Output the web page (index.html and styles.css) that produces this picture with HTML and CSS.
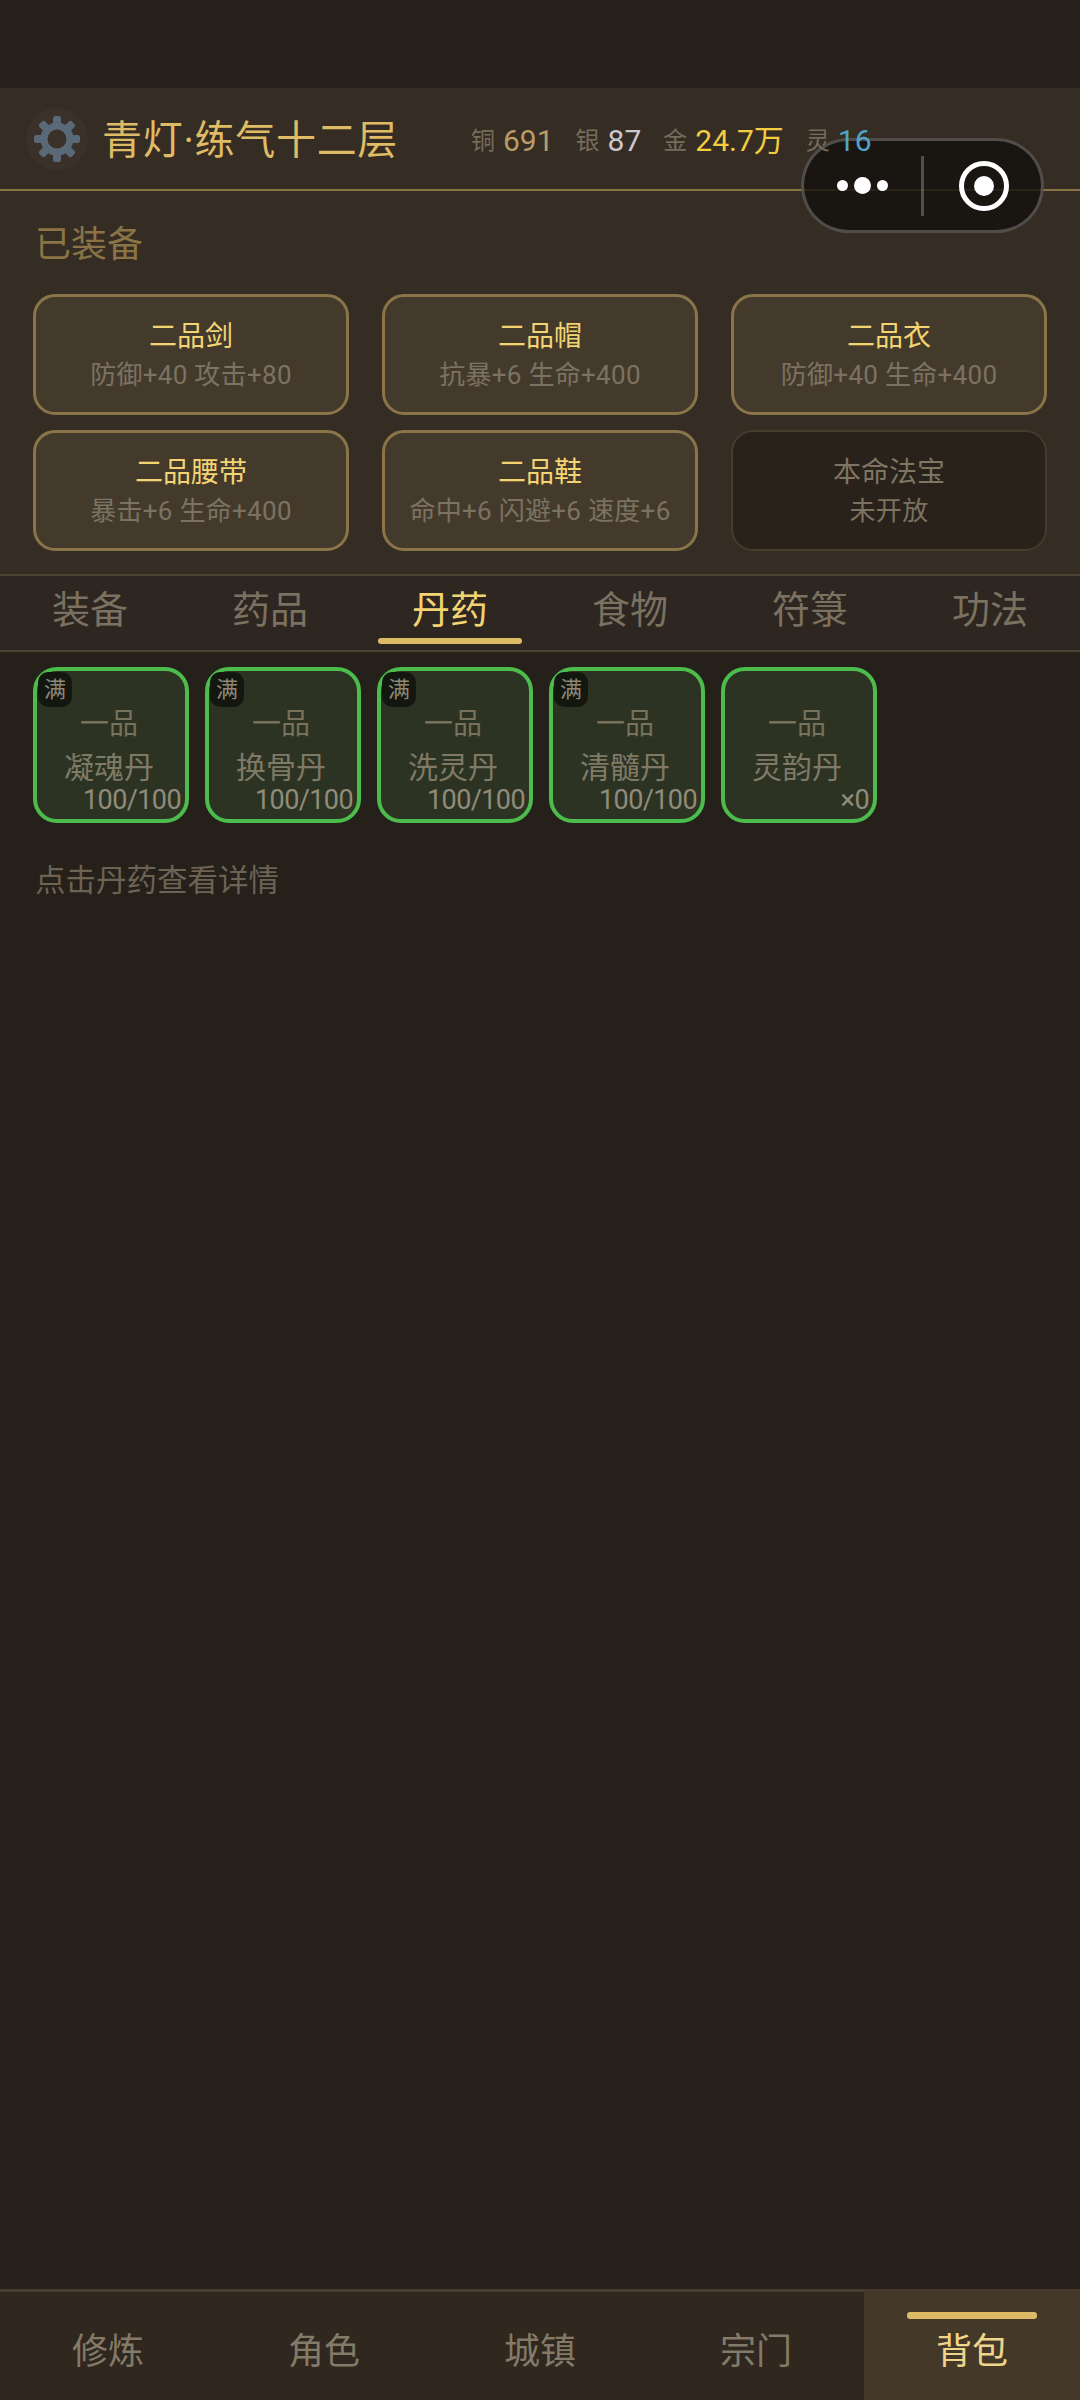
FILE: index.html
```html
<!DOCTYPE html>
<html lang="zh">
<head>
    <meta charset="UTF-8">
    <meta name="viewport" content="width=device-width, initial-scale=1.0">
    <title>背包</title>
    <link rel="stylesheet" href="styles.css">
</head>
<body>
    <div class="status-bar"></div>

    <div class="capsule">
        <div class="capsule-dots">
            <span class="dot"></span>
            <span class="dot dot-big"></span>
            <span class="dot"></span>
        </div>
        <span class="capsule-line"></span>
        <div class="capsule-target"><span></span></div>
    </div>

    <header class="top-bar">
        <div class="gear">
            <svg width="46" height="46" viewBox="0 0 46 46">
                <g fill="#5a6977">
                    <rect x="19" y="0" width="8" height="46" rx="2.5"/>
                    <rect x="19" y="0" width="8" height="46" rx="2.5" transform="rotate(45 23 23)"/>
                    <rect x="19" y="0" width="8" height="46" rx="2.5" transform="rotate(90 23 23)"/>
                    <rect x="19" y="0" width="8" height="46" rx="2.5" transform="rotate(135 23 23)"/>
                </g>
                <circle cx="23" cy="23" r="13" fill="#3a312a" stroke="#5a6977" stroke-width="7"/>
            </svg>
        </div>
        <div class="player-name">青灯<span class="name-dot">·</span>练气十二层</div>
        <div class="money">
            <div class="money-item"><span class="money-label">铜</span><span class="copper">691</span></div>
            <div class="money-item"><span class="money-label">银</span><span class="silver">87</span></div>
            <div class="money-item"><span class="money-label">金</span><span class="gold">24.7万</span></div>
            <div class="money-item"><span class="money-label">灵</span><span class="spirit">16</span></div>
        </div>
    </header>

    <section class="equipped">
        <h2 class="section-title">已装备</h2>
        <div class="equip-grid">
            <div class="equip-card">
                <div class="equip-name">二品剑</div>
                <div class="equip-stats">防御+40 攻击+80</div>
            </div>
            <div class="equip-card">
                <div class="equip-name">二品帽</div>
                <div class="equip-stats">抗暴+6 生命+400</div>
            </div>
            <div class="equip-card">
                <div class="equip-name">二品衣</div>
                <div class="equip-stats">防御+40 生命+400</div>
            </div>
            <div class="equip-card">
                <div class="equip-name">二品腰带</div>
                <div class="equip-stats">暴击+6 生命+400</div>
            </div>
            <div class="equip-card">
                <div class="equip-name">二品鞋</div>
                <div class="equip-stats">命中+6 闪避+6 速度+6</div>
            </div>
            <div class="equip-card locked">
                <div class="equip-name">本命法宝</div>
                <div class="equip-stats">未开放</div>
            </div>
        </div>
    </section>

    <nav class="tabs">
        <div class="tab">装备</div>
        <div class="tab">药品</div>
        <div class="tab active">丹药</div>
        <div class="tab">食物</div>
        <div class="tab">符箓</div>
        <div class="tab">功法</div>
    </nav>

    <main class="content">
        <div class="item-list">
            <div class="item">
                <span class="badge">满</span>
                <div class="item-grade">一品</div>
                <div class="item-name">凝魂丹</div>
                <div class="item-count">100/100</div>
            </div>
            <div class="item">
                <span class="badge">满</span>
                <div class="item-grade">一品</div>
                <div class="item-name">换骨丹</div>
                <div class="item-count">100/100</div>
            </div>
            <div class="item">
                <span class="badge">满</span>
                <div class="item-grade">一品</div>
                <div class="item-name">洗灵丹</div>
                <div class="item-count">100/100</div>
            </div>
            <div class="item">
                <span class="badge">满</span>
                <div class="item-grade">一品</div>
                <div class="item-name">清髓丹</div>
                <div class="item-count">100/100</div>
            </div>
            <div class="item">
                <div class="item-grade">一品</div>
                <div class="item-name">灵韵丹</div>
                <div class="item-count">×0</div>
            </div>
        </div>
        <p class="hint">点击丹药查看详情</p>
    </main>

    <footer class="bottom-nav">
        <div class="nav-item">修炼</div>
        <div class="nav-item">角色</div>
        <div class="nav-item">城镇</div>
        <div class="nav-item">宗门</div>
        <div class="nav-item active">背包</div>
    </footer>
</body>
</html>
```

FILE: styles.css
```css
* {
    box-sizing: border-box;
}

html, body {
    height: 100%;
}

body {
    margin: 0;
    height: 2400px;
    display: flex;
    flex-direction: column;
    position: relative;
    overflow: hidden;
    background: #25201a;
    font-family: Roboto, "Noto Sans CJK SC", sans-serif;
}

.status-bar {
    height: 88px;
    background: #26211b;
}

/* wechat capsule */
.capsule {
    position: absolute;
    top: 138px;
    left: 801px;
    width: 243px;
    height: 95px;
    display: flex;
    align-items: center;
    background: rgba(20, 16, 13, 0.82);
    border: 3px solid rgba(255, 255, 255, 0.24);
    border-radius: 48px;
    z-index: 5;
}

.capsule-dots {
    width: 117px;
    display: flex;
    align-items: center;
    justify-content: center;
    gap: 6px;
}

.dot {
    width: 11px;
    height: 11px;
    border-radius: 50%;
    background: #fff;
}

.dot-big {
    width: 17px;
    height: 17px;
}

.capsule-line {
    width: 3px;
    height: 60px;
    background: rgba(255, 255, 255, 0.25);
}

.capsule-target {
    width: 50px;
    height: 50px;
    margin-left: 35px;
    display: flex;
    align-items: center;
    justify-content: center;
    border: 5px solid #fff;
    border-radius: 50%;
}

.capsule-target span {
    width: 20px;
    height: 20px;
    border-radius: 50%;
    background: #fff;
}

.top-bar {
    height: 103px;
    padding-left: 26px;
    padding-top: 2px;
    display: flex;
    align-items: center;
    background: #352c24;
    border-bottom: 2px solid #8a7444;
}

.gear {
    width: 62px;
    height: 62px;
    margin-top: -2px;
    display: flex;
    align-items: center;
    justify-content: center;
    border-radius: 50%;
    background: #3a312a;
}

.player-name {
    margin-left: 14px;
    padding-top: 2px;
    font-size: 40px;
    line-height: 50px;
    letter-spacing: 0.7px;
    color: #dfbb66;
    white-space: nowrap;
}

.money {
    position: absolute;
    top: 117px;
    left: 471px;
    display: flex;
    gap: 22px;
    z-index: 6;
}

.money-item {
    display: flex;
    align-items: center;
    gap: 8px;
    font-size: 30px;
    line-height: 48px;
    white-space: nowrap;
}

.money-label {
    font-size: 24px;
    color: #766c5c;
}

.copper {
    color: #b99c66;
}

.silver {
    color: #c9c8cf;
}

.gold {
    color: #f1cd3f;
}

.spirit {
    color: #51a5c9;
}

.equipped {
    height: 383px;
    padding: 0 33px;
    background: #352c24;
}

.section-title {
    margin: 0;
    padding-top: 31px;
    padding-left: 2px;
    font-size: 36px;
    line-height: 46px;
    font-weight: 400;
    color: #8a7446;
}

.equip-grid {
    margin-top: 26px;
    display: grid;
    grid-template-columns: repeat(3, 316px);
    grid-auto-rows: 121px;
    column-gap: 33px;
    row-gap: 15px;
}

.equip-card {
    display: flex;
    flex-direction: column;
    align-items: center;
    justify-content: center;
    gap: 2px;
    padding-top: 3px;
    background: #443a2c;
    border: 3px solid #8a7549;
    border-radius: 22px;
}

.equip-name {
    font-size: 28px;
    line-height: 36px;
    color: #f2d473;
}

.equip-stats {
    font-size: 26px;
    line-height: 36px;
    letter-spacing: 0.3px;
    color: #7b7261;
    white-space: nowrap;
}

.equip-card.locked {
    background: #29221b;
    border: 2px solid #463b2c;
}

.locked .equip-name {
    color: #7e7563;
}

.tabs {
    height: 78px;
    display: flex;
    background: #2e2620;
    border-top: 2px solid #4d412f;
    border-bottom: 2px solid #4d412f;
}

.tab {
    width: 180px;
    position: relative;
    text-align: center;
    font-size: 38px;
    line-height: 68px;
    color: #7a7160;
}

.tab.active {
    color: #f2d473;
}

.tab.active::after {
    content: "";
    position: absolute;
    left: 18px;
    right: 18px;
    bottom: 6px;
    height: 6px;
    border-radius: 3px;
    background: #dcba66;
}

.content {
    flex: 1;
    padding: 15px 33px 0;
}

.item-list {
    display: flex;
    gap: 16px;
}

.item {
    position: relative;
    width: 156px;
    height: 156px;
    padding: 33px 4px 0 0;
    background: #2c3323;
    border: 4px solid #4cbc4c;
    border-radius: 24px;
    text-align: center;
}

.badge {
    position: absolute;
    top: 1px;
    left: 1px;
    width: 34px;
    height: 35px;
    border-radius: 10px;
    background: #14170f;
    font-size: 22px;
    line-height: 35px;
    color: #8e8875;
}

.item-grade {
    font-size: 29px;
    line-height: 40px;
    color: #777259;
}

.item-name {
    margin-top: 4px;
    font-size: 30px;
    line-height: 40px;
    color: #7f7a66;
}

.item-count {
    position: absolute;
    right: 4px;
    bottom: 2px;
    font-size: 27px;
    line-height: 34px;
    letter-spacing: -0.6px;
    color: #918c7a;
}

.hint {
    margin: 36px 0 0 2px;
    font-size: 30.5px;
    line-height: 44px;
    color: #6d6354;
}

.bottom-nav {
    height: 111px;
    display: flex;
    background: #30271f;
    border-top: 3px solid #483d2d;
}

.nav-item {
    flex: 1;
    position: relative;
    text-align: center;
    font-size: 36px;
    line-height: 102px;
    padding-top: 9px;
    color: #837a68;
}

.nav-item.active {
    margin-top: -3px;
    padding-top: 12px;
    background: #443929;
    color: #efd58a;
}

.nav-item.active::before {
    content: "";
    position: absolute;
    top: 23px;
    left: 43px;
    width: 130px;
    height: 7px;
    border-radius: 3px;
    background: #dcba66;
}
```
